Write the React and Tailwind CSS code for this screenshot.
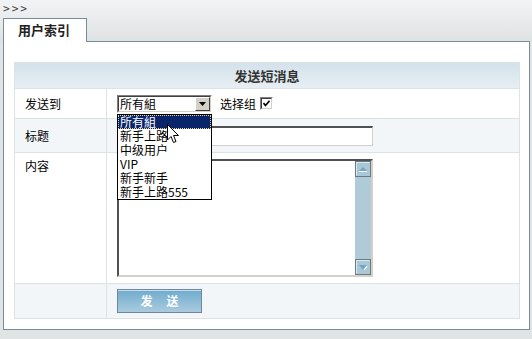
import React from "react";

const F = { fontFamily: '"Noto Sans CJK SC", "Noto Sans", sans-serif' };

function ScrollUp() {
  return (
    <svg width="16" height="16" viewBox="0 0 16 16" className="block">
      <rect x="0.5" y="0.5" width="15" height="15" fill="#a9c7d7" stroke="#6b7a82" />
      <path d="M1.5 14.5V1.5H14.5" stroke="#dbe8ef" fill="none" />
      <path d="M4 10 L8 6 L12 10 Z" fill="#73a6c4" />
      <path d="M4 10.5 H12" stroke="#ffffff" />
    </svg>
  );
}

function ScrollDown() {
  return (
    <svg width="16" height="16" viewBox="0 0 16 16" className="block">
      <rect x="0.5" y="0.5" width="15" height="15" fill="#a9c7d7" stroke="#6b7a82" />
      <path d="M1.5 14.5V1.5H14.5" stroke="#dbe8ef" fill="none" />
      <path d="M4 6 L12 6 L8 11 Z" fill="#73a6c4" />
      <path d="M12 7 L9 11" stroke="#ffffff" strokeWidth="1.2" />
    </svg>
  );
}

export default function App() {
  const items = ["所有組", "新手上路", "中级用户", "VIP", "新手新手", "新手上路555"];
  return (
    <div className="relative w-[532px] h-[339px] overflow-hidden bg-[#e1e4e5] text-[12px] text-black" style={F}>
      <div className="h-[42px] bg-gradient-to-b from-[#f2f3f4] to-[#dfe2e3]">
        <div className="h-[18px] pl-[3px] text-[12px] leading-[15px] text-[#3a3a3a] tracking-[2px]">&gt;&gt;&gt;</div>
        <div className="flex h-[24px] pl-[3px]">
          <div className="w-[84px] h-[24px] bg-white border-t border-l border-r border-[#788c95] pl-[14px] pt-[2px] text-[13px] font-bold leading-[18px] text-[#222]">
            用户索引
          </div>
          <div className="w-[443px] h-[24px] border-b border-[#788c95]" />
        </div>
      </div>

      <div className="ml-[3px] w-[527px] h-[288px] bg-white border-l border-r border-b border-[#788c95] pt-[20px] pl-[10px]">
        <div className="w-[506px] border border-[#dde2e5] flex flex-col">
          <div className="h-[26px] border-b border-[#dde2e5] bg-gradient-to-b from-[#d4e2eb] to-[#e7eef3] flex items-center justify-center text-[13px] font-bold text-[#333]">
            发送短消息
          </div>

          <div className="h-[30px] border-b border-[#dde2e5] flex">
            <div className="w-[92px] border-r border-[#dde2e5] pl-[10px] flex items-center">发送到</div>
            <div className="flex-1 pl-[10px] flex items-center">
              <div className="relative w-[95px] h-[18px] border border-t-[#808080] border-l-[#808080] border-b-white border-r-white">
                <div className="h-full border border-t-[#404040] border-l-[#404040] border-b-[#d4d0c8] border-r-[#d4d0c8] bg-white flex">
                  <div className="flex-1 pl-[1px] leading-[14px]">所有組</div>
                  <div className="w-[15px] h-full bg-[#d4d0c8] border border-t-white border-l-white border-b-[#404040] border-r-[#404040] flex items-center justify-center">
                    <svg width="7" height="4" viewBox="0 0 7 4"><path d="M0 0H7L3.5 4Z" fill="#000" /></svg>
                  </div>
                </div>
                <div className="absolute left-[-1px] top-[18px] w-[95px] h-[86px] bg-white border border-black z-10">
                  {items.map((t, i) => (
                    <div
                      key={t}
                      className={
                        i === 0
                          ? "h-[14px] leading-[12px] pl-[1px] bg-[#0a246a] text-white border border-dotted border-[#f0d890]"
                          : "h-[14px] leading-[14px] pl-[2px]"
                      }
                    >
                      {t}
                    </div>
                  ))}
                </div>
              </div>
              <span className="ml-[8px]">选择组</span>
              <div className="ml-[4px] w-[13px] h-[13px] border border-t-[#808080] border-l-[#808080] border-b-white border-r-white">
                <div className="w-full h-full border border-t-[#404040] border-l-[#404040] border-b-[#d4d0c8] border-r-[#d4d0c8] bg-white flex items-center justify-center">
                  <svg width="7" height="7" viewBox="0 0 7 7"><path d="M0.5 3 L2.5 5.5 L6.5 0.8" stroke="#000" strokeWidth="1.6" fill="none" /></svg>
                </div>
              </div>
            </div>
          </div>

          <div className="h-[34px] border-b border-[#dde2e5] flex bg-[#f2f6f8]">
            <div className="w-[92px] border-r border-[#dde2e5] pl-[10px] flex items-center">标题</div>
            <div className="flex-1 pl-[10px] flex items-center">
              <div className="w-[256px] h-[20px] bg-white border-t-2 border-l-2 border-b border-r border-t-[#505050] border-l-[#505050] border-b-[#d4d0c8] border-r-[#d4d0c8]" />
            </div>
          </div>

          <div className="h-[131px] border-b border-[#dde2e5] flex">
            <div className="w-[92px] border-r border-[#dde2e5] pl-[10px] pt-[4px]">内容</div>
            <div className="flex-1 pl-[10px] pt-[6px]">
              <div className="w-[256px] h-[118px] bg-white border-t-2 border-l-2 border-b-2 border-r-2 border-t-[#505050] border-l-[#505050] border-b-[#d4d0c8] border-r-[#d4d0c8] flex justify-end">
                <div className="w-[16px] h-full bg-[#b0cbd8] flex flex-col justify-between">
                  <ScrollUp />
                  <ScrollDown />
                </div>
              </div>
            </div>
          </div>

          <div className="h-[34px] flex bg-[#f2f6f8]">
            <div className="w-[92px] border-r border-[#dde2e5]" />
            <div className="flex-1 pl-[10px] pt-[5px]">
              <button className="w-[85px] h-[24px] border border-[#708899] bg-gradient-to-b from-[#6eacce] to-[#a9cbde] shadow-[inset_0_1px_0_#c9e0ec] text-white font-bold text-[12px] tracking-[14px] pl-[14px] leading-[20px]">
                发送
              </button>
            </div>
          </div>
        </div>
      </div>

      <svg className="absolute left-[167px] top-[124px] z-20" width="13" height="20" viewBox="0 0 13 20">
        <path d="M0.5 0.5 L0.5 16 L4 12.5 L6.5 18.5 L9 17.5 L6.5 11.5 L11.5 11.5 Z" fill="#fff" stroke="#000" strokeWidth="1" strokeLinejoin="miter" />
      </svg>
    </div>
  );
}
